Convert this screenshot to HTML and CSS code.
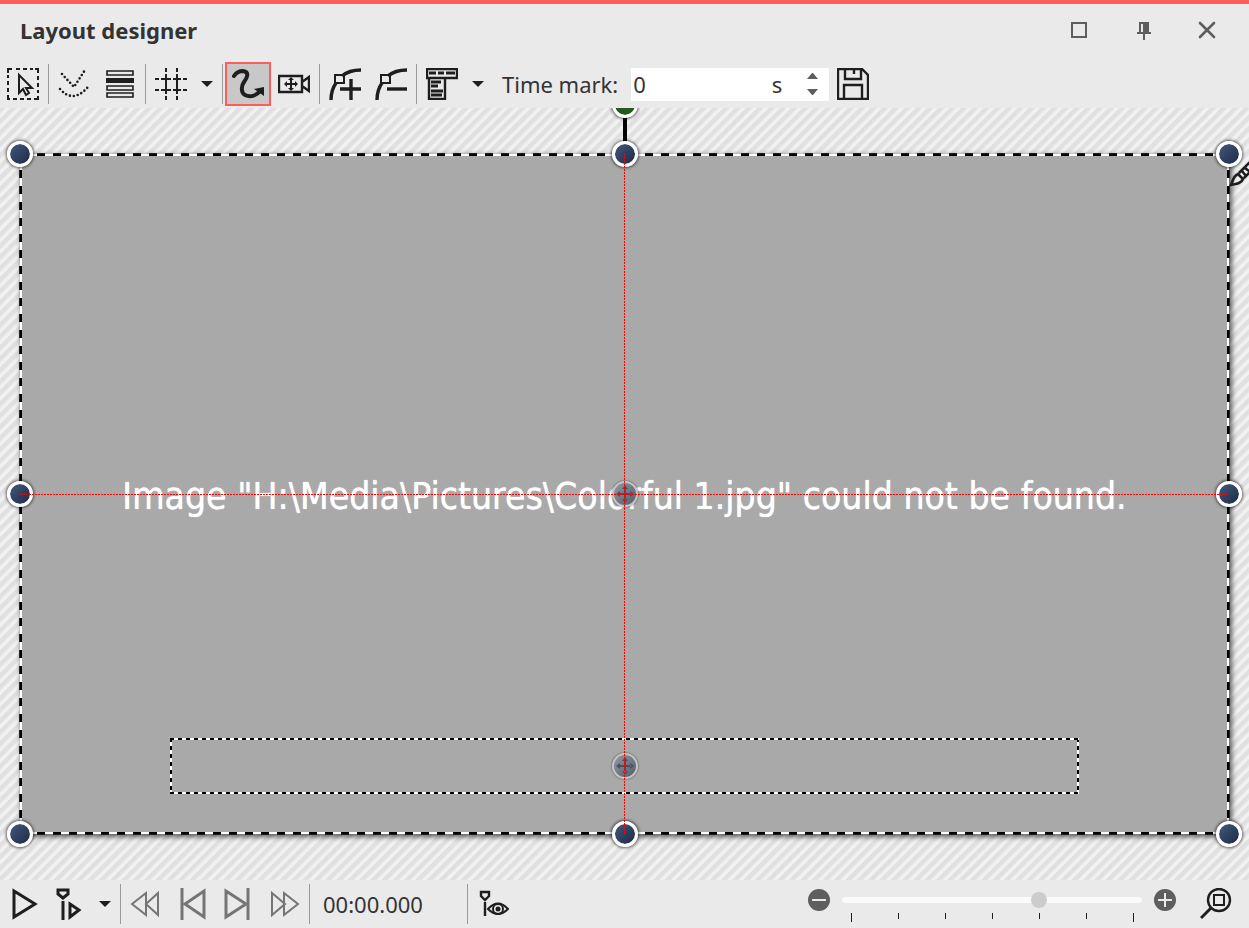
FILE: index.html
```html
<!DOCTYPE html>
<html lang="en">

<head>
    <meta charset="UTF-8">
    <meta name="viewport" content="width=device-width, initial-scale=1.0">
    <title>Layout designer</title>
    <link rel="stylesheet" href="styles.css">
</head>

<body>
    <header class="titlebar">
        <h1>Layout designer</h1>
        <button class="win-btn" aria-label="Maximize">
            <svg width="20" height="20" viewBox="0 0 20 20"><path d="M3 3H17V17H3Z" fill="none" stroke="#5e5e5e" stroke-width="2"/></svg>
        </button>
        <button class="win-btn" aria-label="Pin">
            <svg width="20" height="20" viewBox="0 0 20 20"><path d="M6 2H16V12H18V14H12V20H10V14H4V12H6ZM8 4V12H10V4Z" fill="#5e5e5e" fill-rule="evenodd"/></svg>
        </button>
        <button class="win-btn" aria-label="Close">
            <svg width="20" height="20" viewBox="0 0 20 20"><path d="M3 3L17 17M17 3L3 17" fill="none" stroke="#5e5e5e" stroke-width="2.6" stroke-linecap="round"/></svg>
        </button>
    </header>

    <!-- Tools -->
    <div class="toolbar">
        <button class="tool" aria-label="Select">
            <svg class="icon" viewBox="0 0 32 32">
                <path d="M1 5V1H5M9 1H13M16 1H20M23 1H26M28 1H31V5M31 8V12M31 15V19M31 22V25M31 28V31H27M24 31H20M17 31H13M10 31H6M3 31H1V27M1 24V20M1 17V13M1 10V7"/>
                <path d="M12 7V25L16 21L19 27L22 25L19 20H25Z"/>
            </svg>
        </button>
        <span class="sep"></span>
        <button class="tool" aria-label="Smooth curve">
            <svg class="icon" viewBox="0 0 32 32">
                <path class="dots" d="M4 6L16 19L27 2"/>
                <path class="dots" d="M2 21Q8 28 15 28Q22 28 30 19"/>
            </svg>
        </button>
        <button class="tool" aria-label="Layers">
            <svg class="icon" viewBox="0 0 32 32">
                <path d="M3 3H29V7H3ZM3 18H29V22H3ZM3 25H29V29H3Z" stroke-width="1.6"/>
                <path class="fill" d="M2 10H30V15H2Z"/>
            </svg>
        </button>
        <span class="sep"></span>
        <button class="tool" aria-label="Grid">
            <svg class="icon" viewBox="0 0 32 32">
                <path d="M11 0V4M11 6V9M11 13V19M11 23V26M11 28V32M22 0V4M22 6V9M22 13V19M22 23V26M22 28V32M0 11H4M6 11H16M18 11H26M28 11H32M0 22H4M6 22H16M18 22H26M28 22H32M11 9V13M22 9V13M11 19V23M22 19V23"/>
            </svg>
        </button>
        <button class="drop" aria-label="Grid options"><svg width="12" height="6" viewBox="0 0 12 6"><path d="M0 0H12L6 6Z" fill="#1e1e1e"/></svg></button>
        <span class="sep"></span>
        <button class="tool active" aria-label="Motion path" aria-pressed="true">
            <svg class="icon" viewBox="0 0 32 32">
                <path d="M2 8C4 5 7 3 11 3C18 4 15 10 12 14C9 18 9 25 13 27C19 30 25 27 28 23" stroke-width="4" stroke-linecap="round"/>
                <path class="fill" d="M22 21L32 19V28Z"/>
            </svg>
        </button>
        <button class="tool" aria-label="Camera pan">
            <svg class="icon" viewBox="0 0 32 32">
                <path d="M1 8H24V24H1ZM24 14L31 9V23L24 18" stroke-width="2.4"/>
                <path d="M13 11V21M8 16H18"/>
                <path class="fill" d="M13 9L16 12H10ZM13 23L16 20H10ZM6 16L9 13V19ZM20 16L17 13V19Z"/>
            </svg>
        </button>
        <span class="sep"></span>
        <button class="tool" aria-label="Add point">
            <svg class="icon" viewBox="0 0 32 32">
                <path d="M2 32Q2 22 7 15M13 8Q20 2 32 2" stroke-width="3.4"/>
                <path d="M6 7H15V15H6Z"/>
                <path d="M11 21H32M22 11V32" stroke-width="3.4"/>
            </svg>
        </button>
        <button class="tool" aria-label="Remove point">
            <svg class="icon" viewBox="0 0 32 32">
                <path d="M2 32Q2 22 7 15M13 8Q20 2 32 2" stroke-width="3.4"/>
                <path d="M6 7H15V15H6Z"/>
                <path d="M12 21H32" stroke-width="3.4"/>
            </svg>
        </button>
        <span class="sep"></span>
        <button class="tool" aria-label="Align">
            <svg class="icon" viewBox="0 0 32 32">
                <path d="M1 1H31V10H1ZM3 10V31H19V10" stroke-width="2.4"/>
                <path d="M3 5H10M12 5H18M20 5H29" stroke-width="3"/>
                <path d="M5 14H15M5 18H12M5 23H17M5 27H16" stroke-width="3"/>
            </svg>
        </button>
        <button class="drop" aria-label="Align options"><svg width="12" height="6" viewBox="0 0 12 6"><path d="M0 0H12L6 6Z" fill="#1e1e1e"/></svg></button>
        <label class="time-label" for="timeMark">Time mark:</label>
        <div class="spinner">
            <input type="text" id="timeMark" value="0">
            <span class="unit">s</span>
            <div class="steps">
                <button aria-label="Increase"><svg width="11" height="6" viewBox="0 0 11 6"><path d="M0 6H11L6 0H5Z" fill="#5e5e5e"/></svg></button>
                <button aria-label="Decrease"><svg width="11" height="6" viewBox="0 0 11 6"><path d="M0 0H11L6 6H5Z" fill="#5e5e5e"/></svg></button>
            </div>
        </div>
        <button class="tool" aria-label="Save">
            <svg class="icon" viewBox="0 0 32 32">
                <path d="M1 1H25L31 7V31H1ZM8 1V11H24V1M17 2V6M7 31V17H25V31" stroke-width="2.4"/>
            </svg>
        </button>
    </div>

    <!-- Canvas -->
    <main class="canvas">
        <div class="stage">
            <p class="message">Image "H:\Media\Pictures\Colorful 1.jpg" could not be found.</p>
            <div class="caption-box"></div>
            <div class="move-handle at-center">
                <svg width="18" height="18" viewBox="0 0 18 18"><path d="M9 0L12 4H6ZM9 18L12 14H6ZM0 9L4 6V12ZM18 9L14 6V12ZM8 3H10V15H8ZM3 8H15V10H3Z" fill="#4a4f58"/></svg>
            </div>
            <div class="move-handle at-caption">
                <svg width="18" height="18" viewBox="0 0 18 18"><path d="M9 0L12 4H6ZM9 18L12 14H6ZM0 9L4 6V12ZM18 9L14 6V12ZM8 3H10V15H8ZM3 8H15V10H3Z" fill="#4a4f58"/></svg>
            </div>
            <div class="rotate-stem"></div>
            <div class="handle rotate"></div>
            <div class="handle top left"></div>
            <div class="handle top center"></div>
            <div class="handle top right"></div>
            <div class="handle middle left"></div>
            <div class="handle middle right"></div>
            <div class="handle bottom left"></div>
            <div class="handle bottom center"></div>
            <div class="handle bottom right"></div>
            <div class="guide-h"></div>
            <div class="guide-v"></div>
            <svg class="brush" viewBox="0 0 32 32">
                <path d="M2 26C4 22 4 17 9 15L14 20C12 25 7 25 2 26ZM10 14L24 0M15 19L31 3M13 12L17 17M16 9L21 13" fill="none" stroke="#1e1e1e" stroke-width="2.6"/>
            </svg>
        </div>
    </main>

    <!-- Playback -->
    <footer class="playbar">
        <button class="tool" aria-label="Play">
            <svg class="icon" viewBox="0 0 32 32"><path d="M7 3L28 16L7 29Z" stroke-width="3"/></svg>
        </button>
        <button class="tool" aria-label="Play from marker">
            <svg class="icon" viewBox="0 0 32 32">
                <path d="M5 2H15V6L10 10L5 6Z" stroke-width="3"/>
                <path d="M10 13V32" stroke-width="3"/>
                <path d="M17 16L26 22L17 29Z" stroke-width="3"/>
            </svg>
        </button>
        <button class="drop" aria-label="Play options"><svg width="12" height="6" viewBox="0 0 12 6"><path d="M0 0H12L6 6Z" fill="#1e1e1e"/></svg></button>
        <span class="sep"></span>
        <button class="tool nav" aria-label="Rewind">
            <svg class="icon" viewBox="0 0 32 32"><path d="M2 16L16 5V27ZM16 16L28 5V27Z"/></svg>
        </button>
        <button class="tool nav" aria-label="Previous">
            <svg class="icon" viewBox="0 0 32 32"><path d="M6 0V32" stroke-width="3"/><path d="M9 16L28 3V29Z" stroke-width="3"/></svg>
        </button>
        <button class="tool nav" aria-label="Next">
            <svg class="icon" viewBox="0 0 32 32"><path d="M26 0V32" stroke-width="3"/><path d="M24 16L4 3V29Z" stroke-width="3"/></svg>
        </button>
        <button class="tool nav" aria-label="Fast forward">
            <svg class="icon" viewBox="0 0 32 32"><path d="M4 5L17 16L4 27ZM16 5L30 16L16 27Z"/></svg>
        </button>
        <span class="sep"></span>
        <span class="timecode">00:00.000</span>
        <span class="sep"></span>
        <button class="tool" aria-label="Follow marker">
            <svg class="icon" viewBox="0 0 32 32">
                <path d="M4 4H12V8L8 12L4 8Z" stroke-width="2.4"/>
                <path d="M8 14V28" stroke-width="2.4"/>
                <path d="M11 21Q21 10 31 21Q21 31 11 21Z"/>
                <circle cx="21" cy="21" r="5"/>
                <circle class="fill" cx="21" cy="21" r="2.5"/>
            </svg>
        </button>
        <div class="zoom">
            <button class="round" aria-label="Zoom out"><svg width="22" height="22" viewBox="0 0 22 22"><circle cx="11" cy="11" r="11" fill="#5e5e5e"/><path d="M4 11H18" stroke="#eaeaea" stroke-width="2"/></svg></button>
            <div class="slider">
                <input type="range" min="0" max="6" value="4" aria-label="Zoom">
                <div class="ticks"><i></i><i></i><i></i><i></i><i></i><i></i><i></i></div>
            </div>
            <button class="round" aria-label="Zoom in"><svg width="22" height="22" viewBox="0 0 22 22"><circle cx="11" cy="11" r="11" fill="#5e5e5e"/><path d="M4 11H18M11 4V18" stroke="#eaeaea" stroke-width="2"/></svg></button>
        </div>
        <button class="tool fit" aria-label="Fit to window">
            <svg class="icon" viewBox="0 0 32 32">
                <circle cx="19" cy="12" r="11" stroke-width="2.4"/>
                <path d="M14 7H24V17H14Z"/>
                <path d="M11 20L1 30" stroke-width="3"/>
            </svg>
        </button>
    </footer>
</body>

</html>
```
FILE: styles.css
```css
* {
    box-sizing: border-box;
}

body {
    margin: 0;
    height: 100vh;
    display: flex;
    flex-direction: column;
    overflow: hidden;
    background-color: #eaeaea;
    color: #333;
    font-family: "Noto Sans", sans-serif;
    font-size: 22px;
}

button {
    display: flex;
    align-items: center;
    justify-content: center;
    flex: none;
    padding: 0;
    border: none;
    background: none;
    cursor: pointer;
}

svg {
    display: block;
}

/* Title bar */
.titlebar {
    display: flex;
    align-items: center;
    height: 60px;
    padding: 0 10px 4px 20px;
    border-top: 4px solid #ff5c5c;
}

.titlebar h1 {
    flex: 1;
    margin: 0;
    font-size: 22px;
    font-weight: bold;
}

.win-btn {
    width: 64px;
    height: 40px;
}

/* Toolbars */
.toolbar,
.playbar {
    display: flex;
    align-items: center;
    height: 48px;
    flex: none;
}

.tool {
    width: 46px;
    height: 44px;
}

.tool.active {
    background-color: #c8c8c8;
    border: 2px solid #ff5c5c;
}

.drop {
    width: 26px;
    height: 44px;
}

.icon {
    width: 32px;
    height: 32px;
    flex: none;
    fill: none;
    stroke: #1e1e1e;
    stroke-width: 2;
}

.nav .icon {
    stroke: #757575;
}

.icon .fill {
    fill: #1e1e1e;
    stroke: none;
}

.icon .dots {
    stroke-width: 2.6;
    stroke-linecap: round;
    stroke-dasharray: 0 4;
}

.sep {
    width: 1px;
    height: 40px;
    margin: 0 2px;
    flex: none;
    background-color: #999;
}

.time-label {
    margin: 0 13px 0 11px;
    white-space: nowrap;
}

.spinner {
    display: flex;
    align-items: center;
    width: 198px;
    height: 33px;
    margin-right: 1px;
    background-color: #fff;
}

.spinner input {
    flex: 1;
    min-width: 0;
    padding: 0 2px;
    border: none;
    outline: none;
    background: none;
    color: #333;
    font: inherit;
}

.steps {
    display: flex;
    flex-direction: column;
    width: 33px;
    margin-left: 14px;
}

.steps button {
    height: 16px;
}

/* Canvas */
.canvas {
    display: flex;
    flex: 1;
    min-height: 0;
    padding: 46px 20px;
    overflow: hidden;
    background: repeating-linear-gradient(135deg, #e0e0e0 0, #e0e0e0 3px, #f2f2f2 5px, #f2f2f2 7px, #e0e0e0 8px);
}

.stage {
    position: relative;
    display: flex;
    flex: 1;
    align-items: center;
    justify-content: center;
    background:
        repeating-linear-gradient(90deg, #000 0 8px, #fff 8px 16px) 1px 0 / 100% 2px no-repeat,
        repeating-linear-gradient(90deg, #000 0 8px, #fff 8px 16px) 1px 100% / 100% 2px no-repeat,
        repeating-linear-gradient(180deg, #000 0 8px, #fff 8px 16px) 0 0 / 2px 100% no-repeat,
        repeating-linear-gradient(180deg, #000 0 8px, #fff 8px 16px) 100% 0 / 2px 100% no-repeat,
        #a9a9a9;
    box-shadow: 2px 2px 5px 1px rgba(0, 0, 0, 0.6);
}

/* Faded outer row of the dashes */
.stage::before {
    content: "";
    position: absolute;
    inset: -1px;
    background:
        repeating-linear-gradient(90deg, #222 0 8px, transparent 8px 16px) 2px 0 / 100% 1px no-repeat,
        repeating-linear-gradient(90deg, #222 0 8px, transparent 8px 16px) 2px 100% / 100% 1px no-repeat,
        repeating-linear-gradient(180deg, #222 0 8px, transparent 8px 16px) 0 1px / 1px 100% no-repeat,
        repeating-linear-gradient(180deg, #222 0 8px, transparent 8px 16px) 100% 1px / 1px 100% no-repeat;
}

.message {
    margin: 0;
    padding-top: 4px;
    color: #fff;
    font-family: "DejaVu Sans Condensed", "DejaVu Sans", sans-serif;
    font-stretch: condensed;
    font-size: 37px;
    text-shadow: 0 0 1px #fff;
    white-space: nowrap;
}

.caption-box {
    position: absolute;
    left: 12.4%;
    top: 85.9%;
    width: 75.2%;
    height: 8.2%;
    background:
        repeating-linear-gradient(90deg, #000 0 4px, #fff 4px 8px) 0 0 / 100% 2px no-repeat,
        repeating-linear-gradient(90deg, #000 0 4px, #fff 4px 8px) 0 100% / 100% 2px no-repeat,
        repeating-linear-gradient(180deg, #000 0 4px, #fff 4px 8px) 0 0 / 2px 100% no-repeat,
        repeating-linear-gradient(180deg, #000 0 4px, #fff 4px 8px) 100% 0 / 2px 100% no-repeat;
}

.handle,
.move-handle {
    position: absolute;
    width: 26px;
    height: 26px;
    border-radius: 50%;
    transform: translate(-50%, -50%);
}

.handle {
    border: 3px solid #fff;
    background: linear-gradient(135deg, #4a6085, #16233c) border-box;
    background-clip: padding-box;
    box-shadow: 0 0 3px 1px rgba(0, 0, 0, 0.6);
}

.handle.top { top: 0; }
.handle.middle { top: 50%; }
.handle.bottom { top: 100%; }
.handle.left { left: 0; }
.handle.center { left: 50%; }
.handle.right { left: 100%; }

.handle.rotate {
    left: 50%;
    top: -49px;
    background: #24591f;
    background-clip: padding-box;
}

.rotate-stem {
    position: absolute;
    left: 50%;
    top: -38px;
    width: 4px;
    height: 28px;
    transform: translateX(-50%);
    background-color: #000;
}

.move-handle {
    display: flex;
    align-items: center;
    justify-content: center;
    left: 50%;
    border: 2px solid #c4c4c4;
    background: linear-gradient(135deg, #8f98a6, #555d69);
    box-shadow: 0 0 2px rgba(0, 0, 0, 0.7);
}

.at-center { top: 50%; }
.at-caption { top: 90%; }

.guide-h,
.guide-v {
    position: absolute;
}

.guide-h {
    left: 0;
    right: 0;
    top: 50%;
    height: 1px;
    background: repeating-linear-gradient(90deg, #f00 0 2px, transparent 2px 3px);
}

.guide-v {
    top: 0;
    bottom: 0;
    left: calc(50% - 1px);
    width: 1px;
    background: repeating-linear-gradient(180deg, #f00 0 2px, transparent 2px 3px);
}

.brush {
    position: absolute;
    left: 100%;
    top: 5px;
    width: 32px;
    height: 32px;
}

/* Playback bar */
.timecode {
    width: 153px;
    padding-left: 11px;
}

.zoom {
    display: flex;
    align-items: flex-start;
    gap: 12px;
    height: 30px;
    margin-left: auto;
}

.round {
    width: 22px;
    height: 22px;
    border-radius: 50%;
}

.slider {
    width: 300px;
}

.slider input {
    display: block;
    width: 100%;
    height: 22px;
    margin: 0;
    appearance: none;
    background: none;
}

.slider input::-webkit-slider-runnable-track {
    height: 6px;
    border-radius: 3px;
    background-color: #fafafa;
}

.slider input::-webkit-slider-thumb {
    appearance: none;
    width: 16px;
    height: 16px;
    margin-top: -5px;
    border-radius: 50%;
    background-color: #ccc;
}

.ticks {
    display: flex;
    justify-content: space-between;
    margin: 2px 8px 0 9px;
}

.ticks i {
    width: 1px;
    height: 6px;
    background-color: #1e1e1e;
}

.ticks i:first-child,
.ticks i:last-child {
    height: 9px;
}

.fit {
    margin: 0 10px 0 17px;
}
```
